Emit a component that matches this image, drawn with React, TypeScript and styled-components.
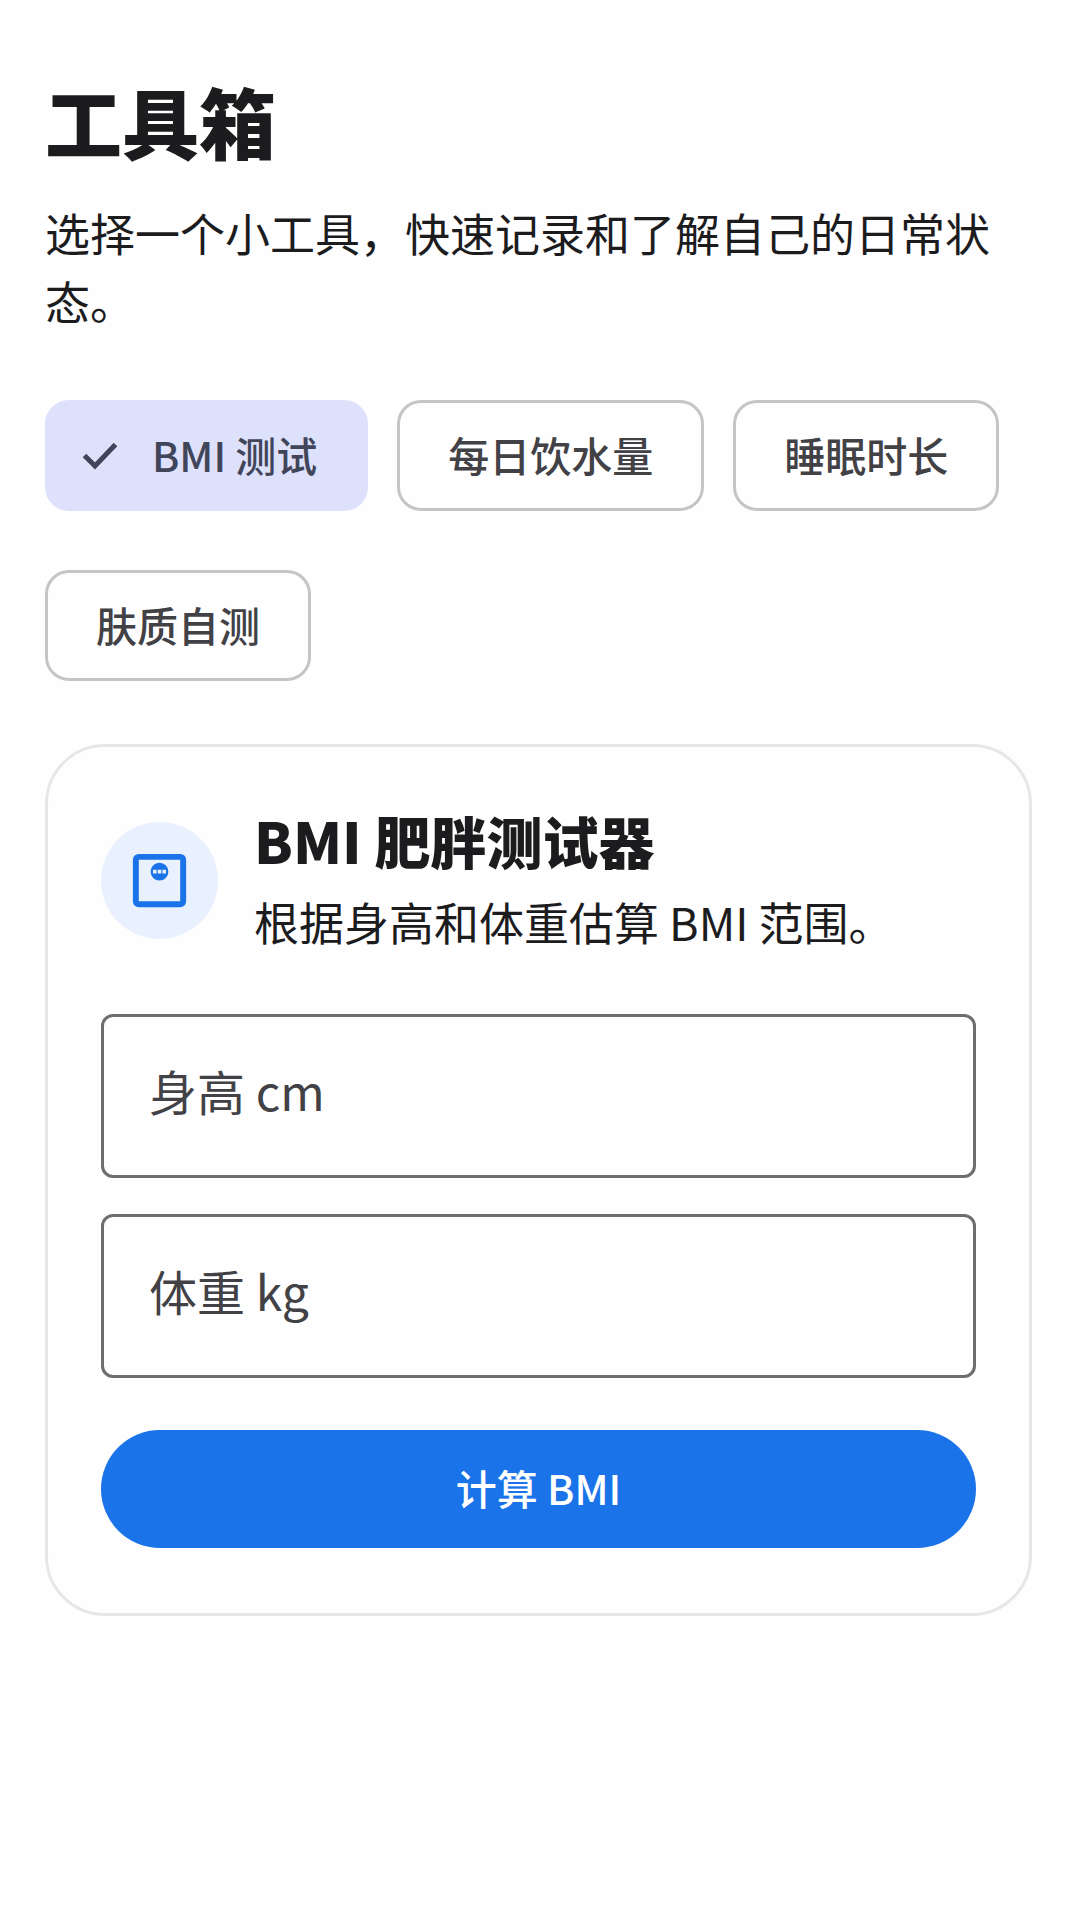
import React, { useState } from "react";
import styled, { createGlobalStyle } from "styled-components";

const GlobalStyle = createGlobalStyle`
  *, *::before, *::after { box-sizing: border-box; }
  body {
    margin: 0;
    background: #fefefe;
    color: #1c1c1e;
    font-family: "Noto Sans CJK SC", "Noto Sans", sans-serif;
  }
  button, input { font-family: inherit; margin: 0; }
`;

const Page = styled.main`
  padding: 73px 48px 48px 45px;
`;

const Title = styled.h1`
  margin: 0;
  font-size: 77px;
  line-height: 96px;
  font-weight: 900;
`;

const BodyText = styled.p`
  margin: 0;
  font-size: 45px;
  line-height: 68px;
`;

const Intro = styled(BodyText)`
  margin-top: 30px;
`;

const Chips = styled.div`
  display: flex;
  flex-wrap: wrap;
  gap: 59px 29px;
  margin-top: 65px;
`;

const Chip = styled.button<{ $selected: boolean }>`
  display: flex;
  align-items: center;
  gap: 28px;
  height: 111px;
  padding: 0 48px 4px ${(p) => (p.$selected ? "28px" : "48px")};
  border: 3px solid ${(p) => (p.$selected ? "#dde1fb" : "#c5c5c7")};
  border-radius: 24px;
  background: ${(p) => (p.$selected ? "#dde1fb" : "transparent")};
  color: ${(p) => (p.$selected ? "#414559" : "#414146")};
  font-size: 41px;
  line-height: 60px;
  font-weight: 500;
  white-space: nowrap;
  cursor: pointer;
`;

const Card = styled.section`
  margin-top: 63px;
  padding: 53px 53px 65px;
  border: 3px solid #e7e7e8;
  border-radius: 60px;
`;

const CardHeader = styled.header`
  display: flex;
  align-items: center;
  gap: 36px;
`;

const CardHeading = styled.div`
  padding-bottom: 4px;
`;

const IconBadge = styled.div`
  display: flex;
  flex: none;
  align-items: center;
  justify-content: center;
  width: 117px;
  height: 117px;
  border-radius: 50%;
  background: #e9f1fe;
`;

const CardTitle = styled.h2`
  margin: 0 0 8px;
  font-size: 56px;
  line-height: 80px;
  font-weight: 900;
`;

const Form = styled.form`
  display: flex;
  flex-direction: column;
  gap: 36px;
  margin-top: 54px;
`;

const Field = styled.input`
  width: 100%;
  height: 164px;
  padding: 0 45px 12px;
  border: 3px solid #6e6e70;
  border-radius: 12px;
  background: transparent;
  color: #1c1c1e;
  font-size: 48px;
  &::placeholder { color: #414146; opacity: 1; }
`;

const Submit = styled.button`
  height: 118px;
  margin-top: 16px;
  padding: 0 48px 4px;
  border: 0;
  border-radius: 59px;
  background: #1a73e8;
  color: #fff;
  font-size: 41px;
  font-weight: 500;
  cursor: pointer;
`;

const CheckIcon = () => (
  <svg width="48" height="48" viewBox="0 0 48 48" fill="none" aria-hidden="true">
    <path d="M8.500 25.500 19 36 39.500 14.500" stroke="currentColor" strokeWidth="5" />
  </svg>
);

const ScaleIcon = () => (
  <svg width="71" height="71" viewBox="0 0 24 24" fill="#1a73e8" aria-hidden="true">
    <path
      fillRule="evenodd"
      d="M5 3h14a2 2 0 0 1 2 2v14a2 2 0 0 1-2 2H5a2 2 0 0 1-2-2V5a2 2 0 0 1 2-2zm0 2v14h14V5z"
    />
    <path
      fillRule="evenodd"
      d="M12 6a3 3 0 1 1 0 6 3 3 0 0 1 0-6zM9.800 8.400v1.200h1.200v-1.200zm1.600 0v1.200h1.200v-1.200zm1.600 0v1.200h1.200v-1.200z"
    />
  </svg>
);

const tools = ["BMI 测试", "每日饮水量", "睡眠时长", "肤质自测"];

export default function App() {
  const [selected, setSelected] = useState(tools[0]);
  return (
    <Page lang="zh-CN">
      <GlobalStyle />
      <Title>工具箱</Title>
      <Intro>选择一个小工具，快速记录和了解自己的日常状态。</Intro>
      <Chips>
        {tools.map((tool) => (
          <Chip
            key={tool}
            type="button"
            $selected={tool === selected}
            aria-pressed={tool === selected}
            onClick={() => setSelected(tool)}
          >
            {tool === selected && <CheckIcon />}
            {tool}
          </Chip>
        ))}
      </Chips>
      <Card>
        <CardHeader>
          <IconBadge>
            <ScaleIcon />
          </IconBadge>
          <CardHeading>
            <CardTitle>BMI 肥胖测试器</CardTitle>
            <BodyText>根据身高和体重估算 BMI 范围。</BodyText>
          </CardHeading>
        </CardHeader>
        <Form onSubmit={(e) => e.preventDefault()}>
          <Field aria-label="身高 cm" placeholder="身高 cm" inputMode="decimal" />
          <Field aria-label="体重 kg" placeholder="体重 kg" inputMode="decimal" />
          <Submit type="submit">计算 BMI</Submit>
        </Form>
      </Card>
    </Page>
  );
}
